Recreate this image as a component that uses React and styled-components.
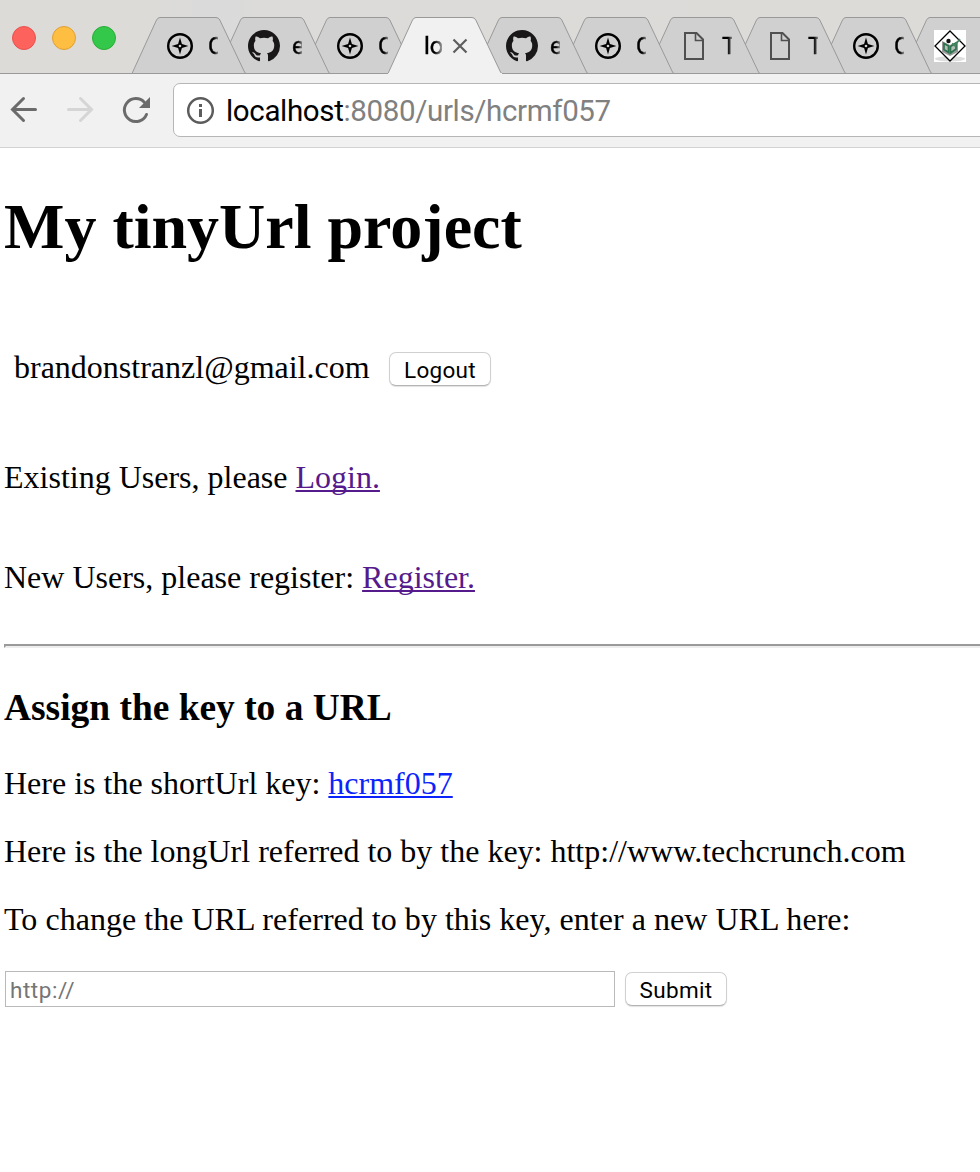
import React from "react";
import styled, { createGlobalStyle } from "styled-components";

const GlobalStyle = createGlobalStyle`
  html, body { margin: 0; padding: 0; background: #fff; overflow: hidden; }
  * { box-sizing: border-box; }
`;

const sans = `Roboto, "Liberation Sans", sans-serif`;

const Window = styled.div`
  width: 980px;
  height: 1172px;
  overflow: hidden;
  background: #fff;
`;

const TitleBar = styled.header`
  position: relative;
  display: flex;
  align-items: flex-end;
  height: 74px;
  overflow: hidden;
  background: linear-gradient(90deg, #dcdbd8 0, #dcdbd8 150px, #dadada 210px, #dcdbd9 300px, #dcdbd8 100%);
  box-shadow: inset 0 -1px 0 #999;
`;

const Lights = styled.div`
  display: flex;
  gap: 16px;
  flex: none;
  width: 132px;
  height: 74px;
  padding: 26px 0 0 12px;
`;

const Light = styled.span`
  width: 24px;
  height: 24px;
  border-radius: 50%;
  background: ${(p) => p.$fill};
  border: 1px solid ${(p) => p.$edge};
`;

const TabItem = styled.div`
  position: relative;
  z-index: ${(p) => p.$z};
  flex: none;
  display: flex;
  align-items: center;
  width: 114px;
  height: 58px;
  margin-right: ${(p) => (p.$tight ? -30 : -28)}px;
  padding: 1px 0 0 ${(p) => (p.$active ? 36 : 32)}px;
`;

const TabShape = styled.svg`
  position: absolute;
  inset: 0;
  z-index: -1;
`;

const Favicon = styled.span`
  display: flex;
  justify-content: center;
  align-items: center;
  flex: none;
  width: 32px;
  height: 32px;
  margin-right: 12px;
  color: #191717;
`;

const TabTitle = styled.span`
  width: ${(p) => p.$w || 10}px;
  overflow: hidden;
  white-space: nowrap;
  font: 24px/32px ${sans};
  color: #000;
  -webkit-text-stroke: 0.4px #000;
  mask-image: linear-gradient(90deg, #000 60%, rgba(0, 0, 0, 0.35) 100%);
`;

const CloseIcon = styled.svg`
  margin-left: 10px;
  margin-top: 1px;
`;

const Toolbar = styled.nav`
  display: flex;
  align-items: flex-start;
  height: 74px;
  padding-top: 9px;
  background: #f1f1f1;
  border-bottom: 1px solid #d2d2d2;
`;

const NavIcons = styled.div`
  display: flex;
  gap: 24px;
  flex: none;
  width: 173px;
  padding: 11px 0 0 8px;
`;

const AddressBar = styled.div`
  display: flex;
  align-items: center;
  flex: 1;
  height: 54px;
  margin-right: -10px;
  padding-left: 11px;
  border: 1px solid #b6b6b6;
  border-radius: 7px;
  background: #fff;
`;

const Address = styled.span`
  margin-left: 10px;
  padding-top: 2px;
  font: 29.5px/36px ${sans};
  letter-spacing: -0.35px;
  color: #808080;
  white-space: nowrap;
`;

const Host = styled.span`
  color: #000;
`;

const Page = styled.main`
  display: flex;
  flex-direction: column;
  padding: 42px 0 0 4px;
  font: 32px/36px "Liberation Serif", "Times New Roman", serif;
  color: #000;
`;

const Heading = styled.h1`
  margin: 0 0 85px;
  font-size: 64px;
  line-height: 74px;
  white-space: nowrap;
`;

const Account = styled.div`
  display: flex;
  align-items: flex-start;
  height: 36px;
  margin-bottom: 74px;
  padding-left: 10px;
`;

const Email = styled.span`
  width: 375px;
`;

const Line = styled.p`
  margin: 0 0 ${(p) => p.$gap}px;
  white-space: nowrap;
  letter-spacing: ${(p) => p.$ls || 0}px;
`;

const Link = styled.a`
  color: ${(p) => (p.$visited ? "#551a8b" : "#0b24fb")};
  text-decoration: underline;
  text-decoration-thickness: 2px;
  text-underline-offset: 2px;
  text-decoration-skip-ink: none;
`;

const Rule = styled.div`
  height: 4px;
  margin-bottom: 39px;
  border-top: 2px solid #9a9a9a;
  border-left: 2px solid #9a9a9a;
  border-bottom: 2px solid #eee;
`;

const SubHeading = styled.h3`
  margin: 0 0 36px;
  font-size: 37.44px;
  line-height: 42px;
  white-space: nowrap;
`;

const Form = styled.form`
  display: flex;
  align-items: center;
  gap: 10px;
  padding-left: 1px;
`;

const Field = styled.input`
  width: 610px;
  height: 36px;
  padding: 2px 4px 0;
  border: 1px solid #b9b9b9;
  border-radius: 0;
  outline: none;
  background: #fff;
  font: 22.5px/28px ${sans};
  letter-spacing: 0.55px;
  &::placeholder { color: #757575; opacity: 1; }
`;

const Button = styled.button`
  width: 102px;
  height: 34px;
  margin-top: ${(p) => p.$top || 0}px;
  padding: 2px 0 0;
  border: 1px solid #d0d0d0;
  border-bottom-color: #b4b4b4;
  border-radius: 7px;
  background: #fff;
  box-shadow: 0 1px 1px rgba(0, 0, 0, 0.12);
  font: 22.5px/28px ${sans};
  letter-spacing: 0.3px;
  color: #000;
`;

const Compass = () => (
  <svg width="28" height="28" viewBox="-14 -14 28 28">
    <circle r="11.8" fill="none" stroke="#000" strokeWidth="2.4" />
    <path d="M0-8.4 1.9-1.9 8.4 0 1.9 1.900 0 8.4-1.9 1.900-8.4 0-1.9-1.9Z" fill="#000" />
    <circle r="1.3" fill="#d0d0d0" />
  </svg>
);

const Document = () => (
  <svg width="20" height="28" viewBox="0 0 20 28" fill="none" stroke="#505050" strokeWidth="2">
    <path d="M1 1H12.5L19 7.5V27H1Z" />
    <path d="M11.5 1V8.5H19" strokeWidth="1.6" />
  </svg>
);

const Reader = () => (
  <svg width="32" height="32" viewBox="0 0 32 32">
    <rect width="32" height="32" fill="#fff" />
    <ellipse cx="16" cy="28.8" rx="15" ry="2.6" fill="#ddd" />
    <path d="M16 1 31 16 16 31 1 16Z" fill="#fff" stroke="#000" strokeWidth="1.3" />
    <path d="M8 11l8 4 8-4v11l-8 4-8-4Z" fill="#999" />
    <path d="M10 13.5l4.5 2.5v6.5L10 19.5ZM16.5 16.5 22 13v6l-5.5 4Z" fill="#b6bdb8" stroke="#2e7350" strokeWidth="1.7" />
    <path d="M18 13.5l2.5 2L26 9" fill="none" stroke="#438661" strokeWidth="1.7" />
    <circle cx="14.5" cy="11" r="2.2" fill="#111" />
  </svg>
);

const Github = () => (
  <svg width="32" height="32" viewBox="0 0 16 16" fill="currentColor">
    <path d="M8 0C3.58 0 0 3.58 0 8c0 3.54 2.29 6.53 5.47 7.59.4.07.55-.17.55-.38 0-.19-.01-.82-.01-1.49-2.01.37-2.53-.49-2.69-.94-.09-.23-.48-.94-.82-1.13-.28-.15-.68-.52-.01-.53.63-.01 1.08.58 1.23.82.72 1.21 1.87.87 2.33.66.07-.52.28-.87.51-1.07-1.78-.2-3.64-.89-3.64-3.95 0-.87.31-1.59.82-2.15-.08-.2-.36-1.02.08-2.12 0 0 .67-.21 2.2.82.64-.18 1.32-.27 2-.27s1.36.09 2 .27c1.53-1.04 2.2-.82 2.2-.82.44 1.1.16 1.92.08 2.12.51.56.82 1.27.82 2.15 0 3.07-1.87 3.75-3.65 3.95.29.25.54.73.54 1.48 0 1.07-.01 1.93-.01 2.2 0 .21.15.46.55.38A8.01 8.01 0 0 0 16 8c0-4.42-3.58-8-8-8Z" />
  </svg>
);

const icons = { compass: Compass, github: Github, document: Document, reader: Reader };

const tabs = [
  { icon: "compass", title: "C", tight: true },
  { icon: "github", title: "e" },
  { icon: "compass", title: "C" },
  { title: "lo", active: true },
  { icon: "github", title: "e" },
  { icon: "compass", title: "C" },
  { icon: "document", title: "T" },
  { icon: "document", title: "T" },
  { icon: "compass", title: "C", tight: true },
  { icon: "reader", title: "" },
];

const tabOutline = "M0 57.5L24.5 4Q25.8 1.5 28 1.5H84Q86.5 1.5 87.8 4L112 55Q113 57.5 114 57.5";

function Tab({ icon, title, active, tight, index }) {
  const Icon = icons[icon];
  return (
    <TabItem $z={active ? 20 : 12 - index} $tight={tight} $active={active}>
      <TabShape width="114" height="58" viewBox="0 0 114 58">
        <path d={tabOutline} fill={active ? "#f1f1f1" : "#d0d0d0"} stroke="#999" />
        <path d="M0 57.5H114" stroke={active ? "#f1f1f1" : "#999"} />
      </TabShape>
      {Icon && <Favicon><Icon /></Favicon>}
      <TabTitle $w={active ? 18 : 10}>{title}</TabTitle>
      {active && (
        <CloseIcon width="16" height="16" viewBox="0 0 16 16" stroke="#5e5e5e" strokeWidth="2.2">
          <path d="M1.5 1.5l13 13M14.5 1.5l-13 13" />
        </CloseIcon>
      )}
    </TabItem>
  );
}

const Arrow = ({ color, flip }) => (
  <svg width="32" height="32" viewBox="0 0 32 32" fill="none" stroke={color} strokeWidth="3" strokeLinecap="round">
    <path d={flip ? "M4.5 15.5H27M16.5 4.5 27.5 15.5 16.5 26.5" : "M27.5 15.5H5M15.5 4.5 4.5 15.5 15.5 26.5"} />
  </svg>
);

const Reload = () => (
  <svg width="32" height="32" viewBox="0 0 32 32">
    <path d="M26.5 20.5A11.5 11.5 0 1 1 24.3 8.2" fill="none" stroke="#6b6b6b" strokeWidth="3" strokeLinecap="round" />
    <path d="M30 3V14H19Z" fill="#6b6b6b" />
  </svg>
);

const Info = () => (
  <svg width="31" height="31" viewBox="0 0 31 31">
    <circle cx="15.5" cy="15.5" r="12.3" fill="none" stroke="#5c5c5c" strokeWidth="2.5" />
    <path d="M14 9h3v3h-3ZM14 14h3v8h-3Z" fill="#5c5c5c" />
  </svg>
);

export default function App() {
  return (
    <Window>
      <GlobalStyle />
      <TitleBar>
        <Lights>
          <Light $fill="#fd625d" $edge="#e9524e" />
          <Light $fill="#fdbe41" $edge="#dfa037" />
          <Light $fill="#34c84a" $edge="#28ad37" />
        </Lights>
        {tabs.map((tab, i) => <Tab key={i} index={i} {...tab} />)}
      </TitleBar>
      <Toolbar>
        <NavIcons>
          <Arrow color="#6b6b6b" />
          <Arrow color="#d5d5d5" flip />
          <Reload />
        </NavIcons>
        <AddressBar>
          <Info />
          <Address><Host>localhost</Host>:8080/urls/hcrmf057</Address>
        </AddressBar>
      </Toolbar>
      <Page>
        <Heading>My tinyUrl project</Heading>
        <Account>
          <Email>brandonstranzl@gmail.com</Email>
          <Button $top={3}>Logout</Button>
        </Account>
        <Line $gap={64}>Existing Users, please <Link $visited>Login.</Link></Line>
        <Line $gap={49}>New Users, please register: <Link $visited>Register.</Link></Line>
        <Rule />
        <SubHeading>Assign the key to a URL</SubHeading>
        <Line $gap={32}>Here is the shortUrl key: <Link>hcrmf057</Link></Line>
        <Line $gap={32}>Here is the longUrl referred to by the key: http://www.techcrunch.com</Line>
        <Line $gap={34} $ls={0.03}>To change the URL referred to by this key, enter a new URL here:</Line>
        <Form>
          <Field placeholder="http://" />
          <Button>Submit</Button>
        </Form>
      </Page>
    </Window>
  );
}
